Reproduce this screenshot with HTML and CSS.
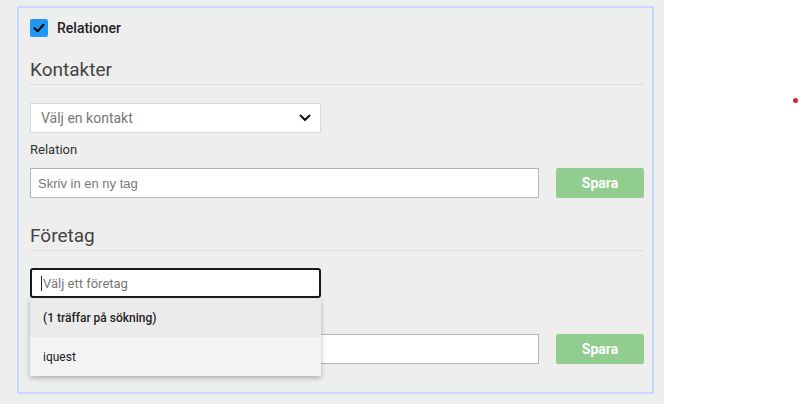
FILE: index.html
```html
<!DOCTYPE html>
<html lang="sv">
<head>
<meta charset="utf-8">
<link rel="stylesheet" href="styles.css">
</head>
<body>
<div class="page">
  <div class="panel">
    <label class="check-row">
      <span class="checkbox">
        <svg width="14" height="14" viewBox="0 0 14 14"><path d="M2.5 7.2 L5.6 10.2 L11.5 3.8" fill="none" stroke="#111" stroke-width="2.2" stroke-linecap="round" stroke-linejoin="round"/></svg>
      </span>
      <span class="check-label">Relationer</span>
    </label>

    <h2 class="section-title">Kontakter</h2>
    <div class="select">
      <span class="select-text">Välj en kontakt</span>
      <svg class="chevron" width="12" height="8" viewBox="0 0 12 8"><path d="M1.5 1.5 L6 6 L10.5 1.5" fill="none" stroke="#111" stroke-width="2" stroke-linecap="round" stroke-linejoin="round"/></svg>
    </div>
    <div class="field-label">Relation</div>
    <div class="row">
      <div class="input">Skriv in en ny tag</div>
      <button class="save">Spara</button>
    </div>

    <h2 class="section-title second">Företag</h2>
    <div class="combo">
      <div class="input focused"><span class="caret"></span>Välj ett företag</div>
      <div class="menu">
        <div class="menu-item head">(1 träffar på sökning)</div>
        <div class="menu-item">iquest</div>
      </div>
    </div>
    <div class="row after-combo">
      <div class="input"></div>
      <button class="save">Spara</button>
    </div>
  </div>
</div>
<div class="dot"></div>
</body>
</html>
```

FILE: styles.css
```css
html, body {
  margin: 0;
  padding: 0;
  background: #ffffff;
  font-family: Roboto, "Noto Sans", sans-serif;
  color: #222;
}
body {
  position: relative;
  width: 800px;
  height: 404px;
  overflow: hidden;
}
.page {
  width: 664px;
  height: 404px;
  background: #eeeeee;
  padding: 6px 0 0 17px;
  box-sizing: border-box;
}
.panel {
  width: 637px;
  height: 388px;
  box-sizing: border-box;
  border: 2px solid #c7d7fe;
  padding: 11px 8px 0 11px;
  display: flex;
  flex-direction: column;
}
.check-row {
  display: flex;
  align-items: center;
  gap: 9px;
  height: 18px;
}
.checkbox {
  width: 18px;
  height: 18px;
  background: #2196f3;
  border-radius: 2px;
  display: flex;
  align-items: center;
  justify-content: center;
}
.check-label {
  font-size: 14px;
  font-weight: 500;
  color: #222;
}
.section-title {
  margin: 21px 0 0 0;
  font-size: 19px;
  font-weight: 400;
  color: #444;
  line-height: 24px;
  padding-bottom: 2px;
  border-bottom: 1px solid #dcdcdc;
}
.section-title.second {
  margin-top: 26px;
}
.select {
  margin-top: 18px;
  width: 291px;
  height: 30px;
  box-sizing: border-box;
  background: #fff;
  border: 1px solid #d9d9d9;
  display: flex;
  align-items: center;
  justify-content: space-between;
  padding: 0 9px 0 10px;
}
.select-text {
  font-size: 14px;
  color: #777;
}
.field-label {
  margin-top: 9px;
  font-size: 13px;
  color: #333;
  line-height: 16px;
}
.row {
  margin-top: 10px;
  display: flex;
  gap: 17px;
}
.row.after-combo {
  margin-top: 36px;
}
.input {
  width: 509px;
  height: 30px;
  box-sizing: border-box;
  background: #fff;
  border: 1px solid #b5b5b5;
  font-family: "Liberation Sans", Arial, sans-serif;
  font-size: 13px;
  color: #777;
  display: flex;
  align-items: center;
  padding-left: 7px;
}
.save {
  width: 88px;
  height: 30px;
  border: none;
  border-radius: 2px;
  background: #90cd8e;
  color: #fff;
  font-family: Roboto, sans-serif;
  font-size: 14px;
  font-weight: 700;
  padding: 0;
}
.combo {
  position: relative;
  margin-top: 17px;
  width: 291px;
}
.input.focused {
  width: 291px;
  border: 2px solid #1a1a1a;
  border-radius: 3px;
  padding-left: 9px;
  font-family: Roboto, sans-serif;
  font-size: 13px;
}
.caret {
  display: inline-block;
  width: 1px;
  height: 15px;
  background: #222;
  margin-right: 1px;
}
.menu {
  position: absolute;
  left: 0;
  top: 31px;
  width: 291px;
  background: #f3f3f3;
  box-shadow: 0 2px 5px rgba(0, 0, 0, 0.28);
  z-index: 2;
}
.menu-item {
  height: 38px;
  display: flex;
  align-items: center;
  padding-left: 13px;
  font-size: 12px;
  color: #222;
  font-family: Roboto, sans-serif;
}
.menu-item + .menu-item {
  height: 39px;
}
.menu-item.head {
  background: #ebebeb;
  font-weight: 500;
}
.dot {
  position: absolute;
  left: 793px;
  top: 98px;
  width: 5px;
  height: 5px;
  border-radius: 50%;
  background: #e02020;
}
```
